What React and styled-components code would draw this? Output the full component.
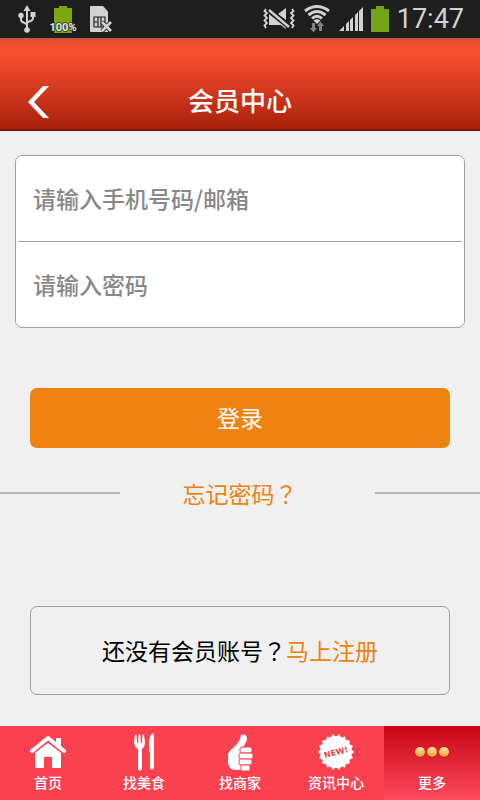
import React, { useState } from 'react';
import styled, { createGlobalStyle } from 'styled-components';

const UsbIcon = () => (
  <svg width="18" height="28" viewBox="0 0 18 28" fill="none" stroke="#d2d2d2" strokeWidth="2" aria-hidden="true">
    <path d="M9 4v20M3 11v3.500c0 1.500 1 2.500 2.500 3L9 19.500M15 9v4c0 1.500-1 2.500-2.500 3L9 17.500" />
    <path d="M9 0l3.500 6h-7z" fill="#d2d2d2" stroke="none" />
    <circle cx="3" cy="10.500" r="2.700" fill="#d2d2d2" stroke="none" />
    <rect x="12.500" y="7" width="5" height="5" fill="#d2d2d2" stroke="none" />
    <circle cx="9" cy="25" r="2.800" fill="#d2d2d2" stroke="none" />
  </svg>
);

const ChargeIcon = () => (
  <svg width="28" height="28" viewBox="0 0 28 28" aria-hidden="true">
    <path d="M10 1h8v2h5v25H5V3h5z" fill="#7aa80c" />
    <text
      x="14"
      y="26"
      textAnchor="middle"
      fontFamily="Roboto, sans-serif"
      fontSize="11"
      fontWeight="700"
      fill="#e6e6e6"
      stroke="#1e1e1e"
      strokeWidth="2"
      strokeOpacity="0.7"
      strokeLinejoin="round"
      paintOrder="stroke"
    >
      100%
    </text>
  </svg>
);

const SimIcon = () => (
  <svg width="22" height="26" viewBox="0 0 22 26" fill="none" aria-hidden="true">
    <path d="M1 0h12l5 5.500V26H1Q0 26 0 25V1Q0 0 1 0z" fill="#d2d2d2" />
    <path d="M4 11h11v10H4zM8 11v10M11 11v10M4 16h4M11 16h4" stroke="#1e1e1e" strokeWidth="1.200" />
    <path d="M12 16l9 9M21 16l-9 9" stroke="#1e1e1e" strokeWidth="4.500" />
    <path d="M12 16l9 9M21 16l-9 9" stroke="#d2d2d2" strokeWidth="2.800" />
  </svg>
);

const MuteIcon = () => (
  <svg width="32" height="22" viewBox="0 0 32 22" fill="none" aria-hidden="true">
    <path d="M6 6l14 11H6zM15 6l8-6v12z" fill="#d2d2d2" />
    <path d="M20 14l3 2v5l-8-6z" fill="#d2d2d2" />
    <path d="M6 2l20 17" stroke="#1e1e1e" strokeWidth="5" />
    <path d="M6 2l20 17" stroke="#d2d2d2" strokeWidth="2.400" />
    <path
      d="M3 1L1.500 3 4 5 1.500 7.500 4 10 1.500 12.500 4 15 1.500 17.500 3 20M29 1l1.500 2L28 5l2.500 2.500L28 10l2.500 2.500L28 15l2.500 2.500L29 20"
      stroke="#d2d2d2"
      strokeWidth="1.800"
    />
  </svg>
);

const WifiIcon = () => (
  <svg width="28" height="28" viewBox="0 0 28 28" fill="none" stroke="#d2d2d2" strokeWidth="3" aria-hidden="true">
    <path d="M2 6Q14-3 26 6M5.500 10Q14 3 22.500 10M9 13.500Q14 9 19 13.500" />
    <path d="M10.500 15.500Q14 13 17.500 15.500L14 19z" fill="#d2d2d2" stroke="none" />
    <path d="M9 18h3v5h2l-3.500 4.500L7 23h2zM16 26h3v-5h2l-3.500-4.500L14 21h2z" fill="#828282" stroke="none" />
  </svg>
);

const SignalIcon = () => (
  <svg width="24" height="24" viewBox="0 0 24 24" fill="#d2d2d2" aria-hidden="true">
    <path d="M0 24l5-5v5zM7 17l3-3v10H7zM11 13l3-3v14h-3zM16 8l3-3v19h-3zM20 4l4-4v24h-4z" />
  </svg>
);

const BatteryIcon = () => (
  <svg width="18" height="26" viewBox="0 0 18 26" aria-hidden="true">
    <path d="M5 0h8v3h5v23H0V3h5z" fill="#74a516" />
  </svg>
);

const BackIcon = () => (
  <svg width="22" height="32" viewBox="0 0 22 32" fill="#fff" aria-hidden="true">
    <path d="M16 0h6L7 16l15 16h-6L1 16z" />
  </svg>
);

const HomeIcon = () => (
  <svg width="36" height="36" viewBox="0 0 36 36" aria-hidden="true">
    <path d="M5 18L18 7l13 11v16h-9V23h-8v11H5z" fill="#fff" />
    <path d="M1 18L18 5l17 13" fill="none" stroke="#fb4150" strokeWidth="6" />
    <path d="M26 4h5v10l-5-4z" fill="#fff" />
    <path d="M2 17L18 4l16 13" fill="none" stroke="#fff" strokeWidth="4" strokeLinecap="round" strokeLinejoin="round" />
  </svg>
);

const FoodIcon = () => (
  <svg width="36" height="38" viewBox="0 0 36 38" fill="#fff" aria-hidden="true">
    <path d="M9 2q1-1 1.500 0l.7 8h1l.3-8q1-1 2 0l.3 8h1l.7-8q1-1 1.500 0l1 7q0 5-3 7v20q-2 3-4 0V16q-4-2-4-7z" />
    <path d="M28 0v35q-2 3-4 0V19h-1V7q1-6 5-7z" />
  </svg>
);

const ThumbIcon = () => (
  <svg width="26" height="38" viewBox="0 0 26 38" aria-hidden="true">
    <path d="M14 2q5-2 6 3 0 4-4 9v23H8Q1 36 1 29v-8q1-3 6-7 6-5 7-12z" fill="#fff" />
    <g fill="#fff" stroke="#fb4150" strokeWidth="1">
      <rect x="13" y="14" width="12" height="6" rx="2" />
      <rect x="12" y="20" width="14" height="6" rx="2" />
      <rect x="12" y="26" width="13" height="6" rx="2" />
      <rect x="14" y="32" width="9" height="6" rx="1" />
    </g>
  </svg>
);

// 18 teeth round the badge
const badgePoints = Array.from({ length: 36 }, (_, i) => {
  const r = i % 2 ? 15.5 : 18;
  const a = (i * Math.PI) / 18;
  return `${(18 + r * Math.cos(a)).toFixed(1)},${(18 + r * Math.sin(a)).toFixed(1)}`;
}).join(' ');

const NewsIcon = () => (
  <svg width="36" height="36" viewBox="0 0 36 36" aria-hidden="true">
    <polygon points={badgePoints} fill="#fff" />
    <text
      x="18"
      y="21"
      textAnchor="middle"
      transform="rotate(-14 18 18)"
      fontFamily="DejaVu Sans, sans-serif"
      fontSize="8"
      fontWeight="700"
      fill="#e8404c"
    >
      NEW!
    </text>
  </svg>
);

const MoreIcon = () => (
  <svg width="36" height="12" viewBox="0 0 36 12" aria-hidden="true">
    <defs>
      <linearGradient id="gold" x1="0" y1="0" x2="0" y2="1">
        <stop offset="0" stopColor="#ffe3a0" />
        <stop offset="1" stopColor="#eda02a" />
      </linearGradient>
    </defs>
    <g fill="#8c0a10" opacity="0.6">
      <circle cx="6" cy="7" r="5" />
      <circle cx="18" cy="7" r="5" />
      <circle cx="30" cy="7" r="5" />
    </g>
    <g fill="url(#gold)">
      <circle cx="6" cy="6" r="5" />
      <circle cx="18" cy="6" r="5" />
      <circle cx="30" cy="6" r="5" />
    </g>
  </svg>
);

const navItems = [
  { label: '首页', icon: HomeIcon },
  { label: '找美食', icon: FoodIcon },
  { label: '找商家', icon: ThumbIcon },
  { label: '资讯中心', icon: NewsIcon },
  { label: '更多', icon: MoreIcon }
];

const App = () => {
  const [user, setUser] = useState({ account: '', password: '' });

  const handleInputChange = (event) => {
    const { name, value } = event.target;
    setUser({ ...user, [name]: value });
  };

  const handleLogin = (event) => {
    event.preventDefault();
  };

  return (
    <Page>
      <GlobalStyle />
      <StatusBar>
        <StatusLeft>
          <UsbIcon />
          <ChargeIcon />
          <SimIcon />
        </StatusLeft>
        <StatusRight>
          <MuteIcon />
          <WifiIcon />
          <SignalIcon />
          <BatteryIcon />
          <Clock>17:47</Clock>
        </StatusRight>
      </StatusBar>

      <Header>
        <BackButton type="button" aria-label="返回">
          <BackIcon />
        </BackButton>
        <Title>会员中心</Title>
      </Header>

      <Main>
        <Form onSubmit={handleLogin}>
          <Fields>
            <Input
              type="text"
              name="account"
              aria-label="手机号码/邮箱"
              placeholder="请输入手机号码/邮箱"
              value={user.account}
              onChange={handleInputChange}
            />
            <Divider />
            <Input
              type="password"
              name="password"
              aria-label="密码"
              placeholder="请输入密码"
              value={user.password}
              onChange={handleInputChange}
            />
          </Fields>
          <LoginButton type="submit">登录</LoginButton>
        </Form>

        <ForgotRow>
          <Line />
          <OrangeLink href="#forgot">
            忘记密码<Mark>？</Mark>
          </OrangeLink>
          <Line />
        </ForgotRow>

        <RegisterBox>
          还没有会员账号<Mark>？</Mark>
          <OrangeLink href="#register">马上注册</OrangeLink>
        </RegisterBox>
      </Main>

      <Nav>
        {navItems.map(({ label, icon: Icon }) => (
          <NavItem key={label} href={`#${label}`} $active={label === '更多'}>
            <NavIcon>
              <Icon />
            </NavIcon>
            {label}
          </NavItem>
        ))}
      </Nav>
    </Page>
  );
};

const GlobalStyle = createGlobalStyle`
  * {
    box-sizing: border-box;
  }

  body {
    margin: 0;
    background-color: #f0f0f0;
    font-family: 'Noto Sans CJK SC', sans-serif;
  }

  svg {
    display: block;
    flex-shrink: 0;
  }
`;

const Page = styled.div`
  display: flex;
  flex-direction: column;
  min-height: 100vh;
`;

const StatusBar = styled.div`
  display: flex;
  justify-content: space-between;
  height: 38px;
  padding: 0 16px 0 18px;
  background-color: #1e1e1e;
`;

const StatusLeft = styled.div`
  display: flex;
  align-items: center;
  gap: 13px;
`;

const StatusRight = styled.div`
  display: flex;
  align-items: center;
  gap: 8px;
`;

const Clock = styled.span`
  color: #d2d2d2;
  font-family: Roboto, sans-serif;
  font-size: 27px;
  font-weight: 400;
  line-height: 38px;
`;

const Header = styled.header`
  display: grid;
  grid-template-columns: 76px 1fr 76px;
  align-items: center;
  height: 93px;
  padding-top: 36px;
  border-top: 1px solid #a5604f;
  border-bottom: 2px solid #7c1407;
  background: linear-gradient(#dc4a2c 0, #ee4f2e 3px, #f8502f 15px, #a81f0a 100%) border-box;
`;

const BackButton = styled.button`
  display: flex;
  justify-content: center;
  padding: 0;
  border: none;
  background: none;
  cursor: pointer;
`;

const Title = styled.h1`
  margin: 0;
  padding-bottom: 4px;
  color: #fff;
  font-size: 26px;
  font-weight: 500;
  line-height: 36px;
  text-align: center;
`;

const Main = styled.main`
  display: flex;
  flex-direction: column;
  padding: 24px 0;
  font-size: 23px;
`;

const Form = styled.form`
  display: flex;
  flex-direction: column;
  gap: 60px;
`;

const Fields = styled.div`
  margin: 0 15px;
  padding: 0 2px;
  border: 1px solid #a0a0a0;
  border-radius: 7px;
  background-color: #fff;
`;

const Divider = styled.hr`
  margin: 0;
  border: none;
  border-top: 1px solid #a0a0a0;
`;

const Input = styled.input`
  display: block;
  width: 100%;
  height: 85px;
  padding: 0 15px 2px;
  border: none;
  outline: none;
  background: none;
  color: #333;
  font-family: inherit;
  font-size: 23px;
  font-weight: 500;

  &::placeholder {
    color: #888;
    opacity: 1;
  }
`;

const LoginButton = styled.button`
  height: 60px;
  margin: 0 30px;
  padding: 0 0 2px;
  border: none;
  border-radius: 7px;
  background-color: #f08211;
  color: #fff;
  font-family: inherit;
  font-size: 23px;
  font-weight: 400;
  cursor: pointer;
`;

const OrangeLink = styled.a`
  color: #f08211;
  text-decoration: none;
`;

// the right line is shorter, so the link is padded back to the middle
const ForgotRow = styled.div`
  display: grid;
  grid-template-columns: 120px 1fr 105px;
  align-items: center;
  margin-top: 28px;
  line-height: 34px;
  text-align: center;

  ${OrangeLink} {
    padding-right: 15px;
  }
`;

const Line = styled.span`
  height: 2px;
  background-color: #b4b4b4;
`;

// the TC face centres the full-width question mark in its cell
const Mark = styled.span`
  font-family: 'Noto Sans CJK TC', sans-serif;
`;

const RegisterBox = styled.p`
  margin: 96px 30px 0;
  padding: 26px 0 27px;
  border: 1px solid #a0a0a0;
  border-radius: 7px;
  color: #000;
  line-height: 34px;
  text-align: center;
`;

const Nav = styled.nav`
  display: grid;
  grid-template-columns: repeat(5, 1fr);
  margin-top: auto;
  background-color: #fb4150;
`;

const NavItem = styled.a`
  display: flex;
  flex-direction: column;
  align-items: center;
  height: 74px;
  padding-top: 6px;
  background: ${({ $active }) => ($active ? 'linear-gradient(#c80512, #ff4a60)' : 'none')};
  color: #fff;
  font-size: 14px;
  font-weight: 500;
  line-height: 20px;
  text-decoration: none;
`;

const NavIcon = styled.span`
  display: flex;
  align-items: center;
  height: 40px;
`;

export default App;
